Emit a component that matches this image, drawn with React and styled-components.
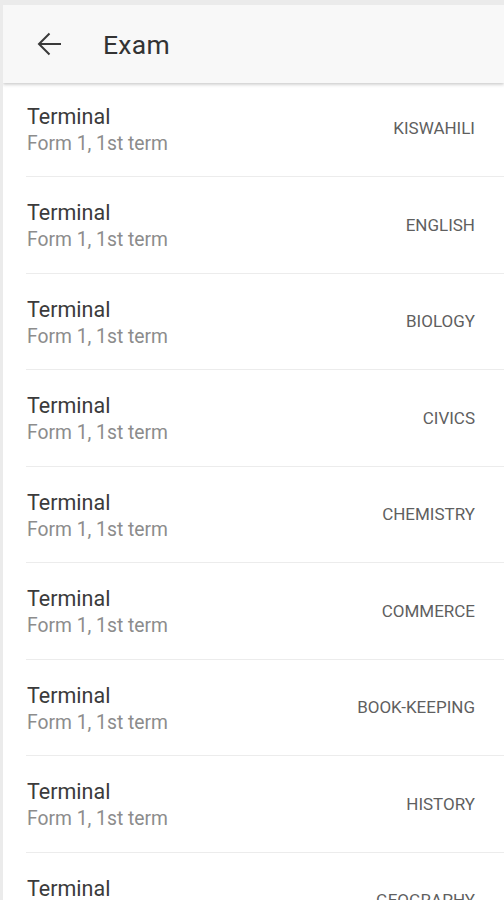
import React from "react";
import styled, { createGlobalStyle } from "styled-components";

const Global = createGlobalStyle`
  html, body { margin: 0; padding: 0; background: #ebebeb; }
  body { font-family: Roboto, "Noto Sans", Arial, sans-serif; }
  * { box-sizing: border-box; }
`;

const Frame = styled.div`
  margin: 5px 0 0 3px;
  height: 895px;
  background: #ffffff;
  overflow: hidden;
  display: flex;
  flex-direction: column;
`;

const Header = styled.header`
  position: relative;
  z-index: 1;
  height: 78px;
  flex: none;
  display: flex;
  align-items: center;
  background: #f8f8f8;
  box-shadow: 0 1px 3px rgba(0, 0, 0, 0.18), 0 3px 3px rgba(0, 0, 0, 0.05);
  padding-left: 34px;
`;

const BackButton = styled.button`
  border: 0;
  background: none;
  padding: 0;
  width: 24px;
  height: 24px;
  display: flex;
  align-items: center;
  justify-content: center;
  color: #3a3a3a;
`;

const Title = styled.h1`
  margin: 0 0 0 42px;
  font-size: 26.5px;
  font-weight: 400;
  color: #333333;
  letter-spacing: 0.3px;
`;

const List = styled.ul`
  list-style: none;
  margin: -2.5px 0 0;
  padding: 0;
`;

const Row = styled.li`
  height: 96.5px;
  display: flex;
  align-items: flex-start;
  justify-content: space-between;
  margin-left: 23px;
  padding: 22px 29px 0 1px;
  border-bottom: 1px solid #ececec;
`;

const TextCol = styled.div`
  display: flex;
  flex-direction: column;
`;

const Primary = styled.span`
  font-size: 21.5px;
  line-height: 27px;
  color: #3b3b3b;
`;

const Secondary = styled.span`
  font-size: 19.3px;
  line-height: 27px;
  color: #8c8c8c;
`;

const Subject = styled.span`
  margin-top: 15.5px;
  font-size: 17px;
  line-height: 20px;
  color: #5f5f5f;
  text-transform: uppercase;
`;

const subjects = [
  "Kiswahili",
  "English",
  "Biology",
  "Civics",
  "Chemistry",
  "Commerce",
  "Book-keeping",
  "History",
  "Geography",
];

export default function App() {
  return (
    <>
      <Global />
      <Frame>
        <Header>
          <BackButton aria-label="Back">
            <svg width="24" height="24" viewBox="0 0 24 24" fill="none" stroke="currentColor" strokeWidth="2" strokeLinecap="butt" strokeLinejoin="miter">
              <path d="M24 12H2" />
              <path d="M12.5 1.5L2 12l10.5 10.5" />
            </svg>
          </BackButton>
          <Title>Exam</Title>
        </Header>
        <List>
          {subjects.map((s) => (
            <Row key={s}>
              <TextCol>
                <Primary>Terminal</Primary>
                <Secondary>Form 1, 1st term</Secondary>
              </TextCol>
              <Subject>{s}</Subject>
            </Row>
          ))}
        </List>
      </Frame>
    </>
  );
}
